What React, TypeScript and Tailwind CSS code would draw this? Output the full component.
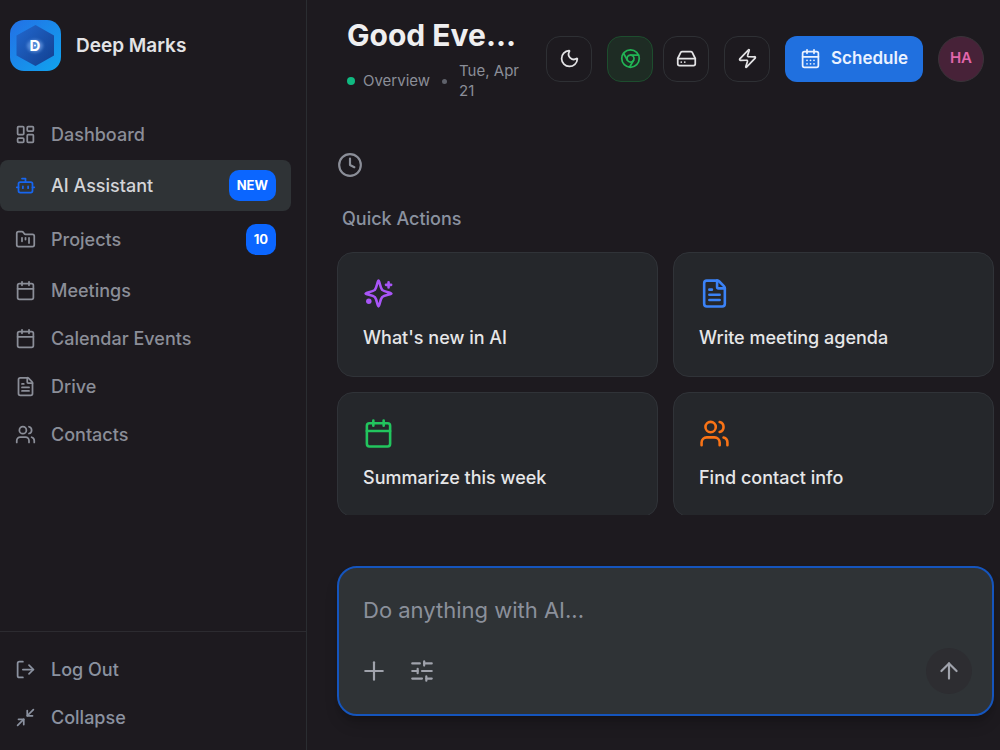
import { useState } from 'react';
import {
  ArrowUp,
  Bot,
  Calendar,
  CalendarDays,
  Chrome,
  Clock,
  FileText,
  FolderKanban,
  HardDrive,
  LayoutDashboard,
  LogOut,
  Minimize2,
  Moon,
  Plus,
  SlidersHorizontal,
  Users,
  Zap,
} from 'lucide-react';

type IconProps = { size?: number; className?: string };

// four-pointed star with a small plus and a dot
function SparkleIcon({ size = 24, className }: IconProps) {
  return (
    <svg
      width={size}
      height={size}
      viewBox="0 0 24 24"
      fill="none"
      stroke="currentColor"
      strokeWidth="2"
      strokeLinecap="round"
      strokeLinejoin="round"
      className={className}
      aria-hidden="true"
    >
      <path d="M12 2C11.200 2 10.700 7.500 9.200 9.200 7.500 10.700 2 11.200 2 12s5.500 1.300 7.200 2.800C10.700 16.500 11.200 22 12 22s1.300-5.500 2.800-7.200C16.500 13.300 22 12.800 22 12s-5.500-1.300-7.200-2.800C13.300 7.500 12.800 2 12 2Z" />
      <path d="M19.800 3.300v4M17.800 5.300h4" />
      <circle cx="4.500" cy="18" r="2.100" fill="currentColor" stroke="none" />
    </svg>
  );
}

const navItems = [
  { label: 'Dashboard', icon: LayoutDashboard },
  { label: 'AI Assistant', icon: Bot, badge: 'NEW' },
  { label: 'Projects', icon: FolderKanban, badge: '10' },
  { label: 'Meetings', icon: Calendar },
  { label: 'Calendar Events', icon: Calendar },
  { label: 'Drive', icon: FileText },
  { label: 'Contacts', icon: Users },
];

const quickActions = [
  { label: "What's new in AI", icon: SparkleIcon, color: 'text-[#a855f7]' },
  { label: 'Write meeting agenda', icon: FileText, color: 'text-[#3b82f6]' },
  { label: 'Summarize this week', icon: Calendar, color: 'text-[#22c55e]' },
  { label: 'Find contact info', icon: Users, color: 'text-[#f97316]' },
];

function Logo() {
  return (
    <svg viewBox="0 0 51 51" className="size-[51px] shrink-0" aria-hidden="true">
      <defs>
        <linearGradient id="logo-bg" x1="0" y1="0" x2="1" y2="1">
          <stop offset="0" stopColor="#2370e6" />
          <stop offset="1" stopColor="#10a4ee" />
        </linearGradient>
        <linearGradient id="logo-hex" x1="0" y1="0" x2="1" y2="1">
          <stop offset="0" stopColor="#2268cf" />
          <stop offset="1" stopColor="#123f8f" />
        </linearGradient>
        <filter id="logo-glow" x="-50%" y="-50%" width="200%" height="200%">
          <feGaussianBlur stdDeviation="1.5" />
        </filter>
      </defs>
      <rect width="51" height="51" rx="14" fill="url(#logo-bg)" />
      <path d="M25.500 5 44 15.500V35.500L25.500 46 6.500 35.500V15.500Z" fill="url(#logo-hex)" />
      <ellipse cx="25" cy="26" rx="8" ry="6.500" fill="#8fc0ff" opacity="0.5" filter="url(#logo-glow)" />
      <text x="25" y="31" textAnchor="middle" fontFamily="Inter, sans-serif" fontSize="15" fontWeight="700" fill="#fff">
        D
      </text>
      <circle cx="25" cy="25.500" r="1" fill="#fff" />
    </svg>
  );
}

function Sidebar() {
  const [active, setActive] = useState('AI Assistant');

  return (
    <aside className="flex w-[307px] shrink-0 flex-col border-r border-[#2a2d31]">
      <div className="flex items-center gap-[15px] px-[10px] pt-5 pb-[41px]">
        <Logo />
        <span className="text-[19px] leading-[27px] font-semibold text-[#e3e3e5]">Deep Marks</span>
      </div>

      <nav className="flex flex-1 flex-col gap-[3px] pr-[15px]">
        {navItems.map(({ label, icon: Icon, badge }) => (
          <button
            key={label}
            type="button"
            onClick={() => setActive(label)}
            className={`flex w-full items-center gap-[15px] rounded-lg px-[15px] py-[10px] text-left text-[18px] leading-[25px] font-medium ${
              active === label ? 'bg-[#2f3336] text-[#d4d5d8]' : 'text-[#8b8e98]'
            }`}
          >
            <Icon size={21} className={active === label ? 'text-[#1766f0]' : ''} />
            <span className="flex-1">{label}</span>
            {badge && (
              <span className="rounded-[10px] bg-[#0b66ff] px-2 text-[13px] leading-[31px] font-bold text-white">
                {badge}
              </span>
            )}
          </button>
        ))}
      </nav>

      <div className="flex flex-col gap-[3px] border-t border-[#2c2b30] pt-[15px] pr-[15px] pb-[10px]">
        <button type="button" className="flex items-center gap-[15px] px-[15px] py-[10px] text-[18px] leading-[25px] font-medium text-[#8b92a0]">
          <LogOut size={21} />
          Log Out
        </button>
        <button type="button" className="flex items-center gap-[15px] px-[15px] py-[10px] text-[18px] leading-[25px] font-medium text-[#8b92a0]">
          <Minimize2 size={21} />
          Collapse
        </button>
      </div>
    </aside>
  );
}

function Header() {
  return (
    <header className="flex items-center gap-[15px] py-4 pr-4 pl-10 text-[#e3e3e5]">
      <div className="min-w-0 flex-1">
        <h1 className="truncate text-[30px] leading-[39px] font-bold text-[#efeff0]">Good Evening</h1>
        <div className="mt-[6px] flex items-center text-[15px] leading-5 text-[#8b8e98]">
          <span className="size-2 shrink-0 rounded-full bg-[#10b981]" />
          <span className="ml-2">Overview</span>
          <span className="mx-3 size-[5px] shrink-0 rounded-full bg-[#5f626b]" />
          <span>Tue, Apr 21</span>
        </div>
      </div>

      <button type="button" aria-label="Toggle theme" className="flex size-[46px] shrink-0 items-center justify-center rounded-[14px] border border-[#2e3034]">
        <Moon size={21} />
      </button>
      <div className="flex shrink-0 gap-[10px]">
        <button type="button" aria-label="Chrome extension" className="flex size-[46px] items-center justify-center rounded-[14px] border border-[#1d4d2e] bg-[#1e2c24] text-[#22b455]">
          <Chrome size={21} />
        </button>
        <button type="button" aria-label="Drive" className="flex size-[46px] items-center justify-center rounded-[14px] border border-[#2e3034]">
          <HardDrive size={21} />
        </button>
      </div>
      <button type="button" aria-label="Shortcuts" className="flex size-[46px] shrink-0 items-center justify-center rounded-[14px] border border-[#2e3034]">
        <Zap size={21} />
      </button>
      <button type="button" className="flex h-[46px] shrink-0 items-center gap-[10px] rounded-xl bg-[#2070df] px-[15px] text-[17px] font-semibold text-[#eaf2ff]">
        <CalendarDays size={21} />
        Schedule
      </button>
      <button type="button" aria-label="Account" className="flex size-[46px] shrink-0 items-center justify-center rounded-full border border-[#3a3339] bg-[#472238] text-[15px] font-semibold text-[#e266ab]">
        HA
      </button>
    </header>
  );
}

function Composer() {
  const [prompt, setPrompt] = useState('');

  return (
    <form
      onSubmit={(e) => e.preventDefault()}
      className="rounded-[20px] border-2 border-[#1555bd] bg-[#2f3336] pt-6 pr-5 pb-5 pl-6 shadow-lg shadow-black/20"
    >
      <input
        type="text"
        aria-label="Message"
        value={prompt}
        onChange={(e) => setPrompt(e.target.value)}
        placeholder="Do anything with AI..."
        className="block h-9 w-full bg-transparent text-[22px] text-[#e3e3e5] outline-none placeholder:text-[#8b909b]"
      />
      <div className="mt-5 flex items-center gap-5 text-[#a0a3ac]">
        <button type="button" aria-label="Add attachment" className="-ml-1">
          <Plus size={30} strokeWidth={1.75} />
        </button>
        <button type="button" aria-label="Options">
          <SlidersHorizontal size={26} />
        </button>
        <button type="submit" aria-label="Send" className="ml-auto flex size-[46px] items-center justify-center rounded-full bg-[#2d2d31]">
          <ArrowUp size={26} />
        </button>
      </div>
    </form>
  );
}

export default function App() {
  return (
    <div className="flex h-screen bg-[#1d1a1f] font-['Inter',sans-serif]">
      <Sidebar />
      <main className="flex min-w-0 flex-1 flex-col">
        <Header />

        <section className="min-h-0 flex-1 overflow-hidden pt-[35px] pr-[6px] pl-[30px]">
          <button type="button" aria-label="History" className="block text-[#8b8e98]">
            <Clock size={26} />
          </button>
          <h2 className="mt-7 mb-5 pl-[5px] text-[18px] leading-[26px] font-medium text-[#8b92a0]">Quick Actions</h2>
          <div className="grid grid-cols-2 gap-[15px]">
            {quickActions.map(({ label, icon: Icon, color }) => (
              <button
                key={label}
                type="button"
                className="rounded-2xl border border-[#303338] bg-[#25272b] p-[25px] text-left"
              >
                <Icon size={31} className={color} />
                <span className="mt-[15px] block text-[18px] leading-[27px] font-medium text-[#e6e6e8]">{label}</span>
              </button>
            ))}
          </div>
        </section>

        <div className="pt-[51px] pr-[6px] pb-[34px] pl-[30px]">
          <Composer />
        </div>
      </main>
    </div>
  );
}
